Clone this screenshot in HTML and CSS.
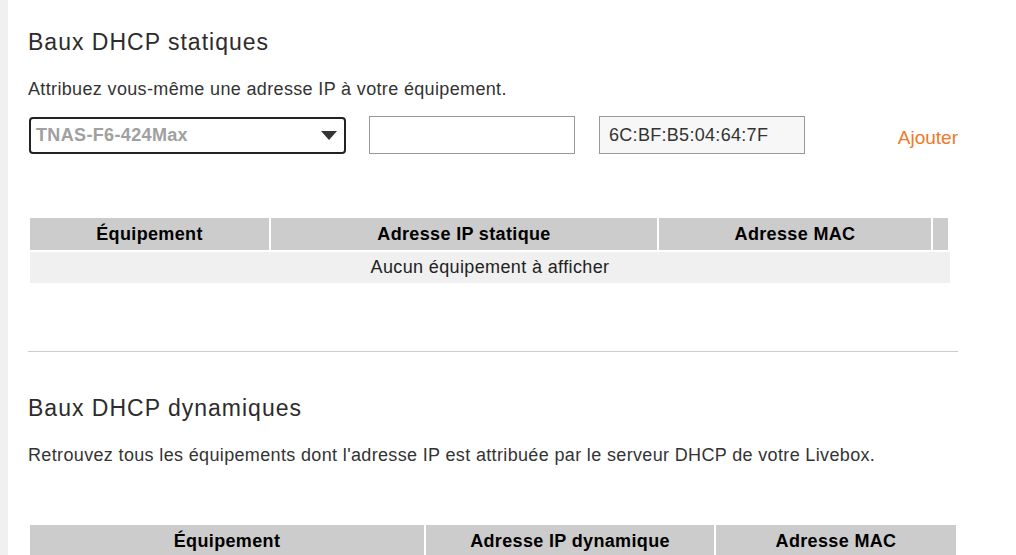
FILE: index.html
```html
<!DOCTYPE html>
<html lang="fr">

<head>
    <meta charset="UTF-8">
    <meta name="viewport" content="width=device-width, initial-scale=1.0">
    <title>Baux DHCP</title>
    <link rel="stylesheet" href="styles.css">
</head>

<body>
    <div class="content">
        <section class="block">
            <h2>Baux DHCP statiques</h2>
            <p class="intro">Attribuez vous-même une adresse IP à votre équipement.</p>

            <div class="lease-form">
                <div class="select-box">
                    <span>TNAS-F6-424Max</span>
                    <svg class="select-arrow" width="16" height="9" viewBox="0 0 16 9">
                        <path d="M0 0 L16 0 L8 9 Z" fill="#333"/>
                    </svg>
                </div>
                <input type="text" class="field">
                <input type="text" class="field readonly" value="6C:BF:B5:04:64:7F" readonly>
                <a href="#" class="add-link">Ajouter</a>
            </div>

            <div class="grid static-grid">
                <div class="grid-head">
                    <div class="col-device">Équipement</div>
                    <div class="col-ip">Adresse IP statique</div>
                    <div class="col-mac">Adresse MAC</div>
                    <div class="col-scroll"></div>
                </div>
                <div class="grid-empty">Aucun équipement à afficher</div>
            </div>
        </section>

        <hr class="separator">

        <section class="block">
            <h2>Baux DHCP dynamiques</h2>
            <p class="intro">Retrouvez tous les équipements dont l'adresse IP est attribuée par le serveur DHCP de votre Livebox.</p>

            <div class="grid dynamic-grid">
                <div class="grid-head">
                    <div class="col-device">Équipement</div>
                    <div class="col-ip">Adresse IP dynamique</div>
                    <div class="col-mac">Adresse MAC</div>
                </div>
            </div>
        </section>
    </div>
</body>

</html>
```

FILE: styles.css
```css
body {
    margin: 0;
    font-family: "Liberation Sans", Arial, sans-serif;
    color: #333;
    background-color: #fff;
    border-left: 8px solid #f0f0f0;
    min-height: 555px;
    box-sizing: border-box;
}

.content {
    width: 930px;
    padding: 0 20px;
}

h2 {
    margin: 28px 0 0;
    font-size: 23px;
    font-weight: normal;
    line-height: 28px;
    letter-spacing: 1px;
    color: #2e2b2b;
}

.intro {
    margin: 22px 0 0;
    font-size: 18px;
    line-height: 22px;
    letter-spacing: 0.35px;
}

.lease-form {
    display: flex;
    align-items: center;
    margin-top: 16px;
    height: 38px;
}

.select-box {
    display: flex;
    align-items: center;
    justify-content: space-between;
    box-sizing: border-box;
    width: 317px;
    height: 37px;
    margin-left: 1px;
    padding: 0 5px 0 5px;
    border: 2px solid #222;
    border-radius: 4px;
    font-size: 18px;
    font-weight: bold;
    letter-spacing: 0.35px;
    color: #a0a0a0;
}

.select-arrow {
    margin-right: 2px;
}

.field {
    box-sizing: border-box;
    width: 206px;
    height: 38px;
    margin-left: 23px;
    padding: 0 9px;
    border: 1px solid #999;
    font-family: inherit;
    font-size: 18px;
    letter-spacing: 0.3px;
    color: #333;
    background-color: #fff;
}

.field.readonly {
    margin-left: 24px;
    background-color: #f7f7f7;
}

.add-link {
    margin-left: auto;
    padding-top: 5px;
    font-size: 19px;
    color: #f0782a;
    text-decoration: none;
}

.grid {
    margin-left: 2px;
}

.static-grid {
    margin-top: 64px;
}

.dynamic-grid {
    margin-top: 59px;
}

.grid-head {
    display: flex;
    gap: 2px;
    height: 32px;
}

.grid-head div {
    display: flex;
    align-items: center;
    justify-content: center;
    background-color: #ccc;
    font-size: 18px;
    font-weight: bold;
    letter-spacing: 0.35px;
    color: #000;
}

.static-grid .col-device { width: 239px; }
.static-grid .col-ip { width: 386px; }
.static-grid .col-mac { width: 272px; }
.static-grid .col-scroll { width: 15px; }

.dynamic-grid .col-device { width: 394px; }
.dynamic-grid .col-ip { width: 288px; }
.dynamic-grid .col-mac { width: 240px; }

.grid-empty {
    width: 920px;
    height: 31px;
    margin-top: 2px;
    line-height: 31px;
    text-align: center;
    font-size: 18px;
    letter-spacing: 0.37px;
    color: #222;
    background-color: #f0f0f0;
}

.separator {
    margin: 68px 0 0;
    border: 0;
    border-top: 1px solid #ccc;
}

.separator + .block h2 {
    margin-top: 42px;
}
```
